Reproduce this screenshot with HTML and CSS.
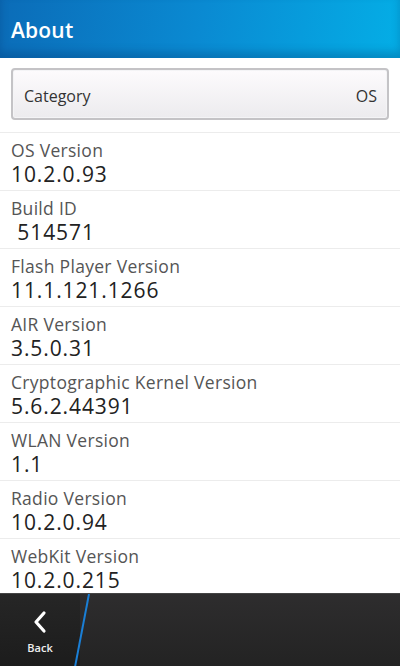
FILE: index.html
```html
<!DOCTYPE html>
<html>
<head>
<meta charset="utf-8">
<link rel="stylesheet" href="styles.css">
</head>
<body>
<div class="screen">
  <header class="titlebar"><span class="title">About</span></header>
  <div class="picker-wrap">
    <div class="picker"><span>Category</span><span>OS</span></div>
  </div>
  <div class="list">
    <div class="row"><div class="label">OS Version</div><div class="value">10.2.0.93</div></div>
    <div class="row"><div class="label">Build ID</div><div class="value">&nbsp;514571</div></div>
    <div class="row"><div class="label">Flash Player Version</div><div class="value">11.1.121.1266</div></div>
    <div class="row"><div class="label">AIR Version</div><div class="value">3.5.0.31</div></div>
    <div class="row"><div class="label">Cryptographic Kernel Version</div><div class="value">5.6.2.44391</div></div>
    <div class="row"><div class="label">WLAN Version</div><div class="value">1.1</div></div>
    <div class="row"><div class="label">Radio Version</div><div class="value">10.2.0.94</div></div>
    <div class="row"><div class="label">WebKit Version</div><div class="value">10.2.0.215</div></div>
  </div>
  <footer class="actionbar">
    <div class="back">
      <svg class="chev" width="16" height="24" viewBox="0 0 16 24"><path d="M12 3 L4 12 L12 21" fill="none" stroke="#fff" stroke-width="3.2" stroke-linecap="round" stroke-linejoin="round"/></svg>
      <span class="back-label">Back</span>
    </div>
    <svg class="slash" width="20" height="73" viewBox="0 0 20 73"><line x1="16" y1="0" x2="2" y2="73" stroke="#1a7fd6" stroke-width="2"/></svg>
  </footer>
</div>
</body>
</html>
```
FILE: styles.css
```css
* { box-sizing: border-box; }
html, body { margin: 0; padding: 0; }
body { font-family: "Open Sans", "Noto Sans", sans-serif; background: #fff; }
.screen { width: 400px; height: 666px; display: flex; flex-direction: column; overflow: hidden; position: relative; }
.titlebar {
  height: 58px; flex: none;
  background: linear-gradient(100deg, #0b6cb8 0%, #0a8ad2 50%, #04aee6 100%);
  display: flex; align-items: center; padding: 0 11px;
  box-shadow: inset 0 -6px 8px rgba(0,40,90,0.25);
}
.title { color: #fff; font-size: 21px; font-weight: 600; letter-spacing: 0.2px; margin-top: 2px; }
.picker-wrap { padding: 10px 11px 12px; border-bottom: 1px solid #ececec; flex: none; }
.picker {
  height: 52px; border: 2px solid #c4c3c6; border-radius: 4px;
  background: linear-gradient(#fdfbfd, #ecebee);
  box-shadow: inset 0 0 0 1px #f4f4f6;
  display: flex; justify-content: space-between; align-items: center;
  padding: 3px 10px 0 11px; font-size: 16px; color: #333;
}
.list { flex: 1; overflow: hidden; }
.row { height: 58px; border-bottom: 1px solid #ececec; padding: 5px 11px 0; }
.label { font-size: 17.5px; color: #555; line-height: 24px; letter-spacing: 0.3px; }
.value { font-size: 21px; color: #222; line-height: 24px; letter-spacing: 0.9px; }
.actionbar {
  height: 73px; flex: none; display: flex;
  background: linear-gradient(#2e2d2e, #232323);
  border-top: 1px solid #444; position: relative;
}
.back { width: 80px; display: flex; flex-direction: column; align-items: center; justify-content: center; padding-top: 4px; background: linear-gradient(#262626, #1c1c1c); }
.chev { display: block; }
.back-label { color: #eee; font-size: 11px; font-weight: 600; margin-top: 6px; }
.slash { position: absolute; left: 73px; top: 0; }
```
